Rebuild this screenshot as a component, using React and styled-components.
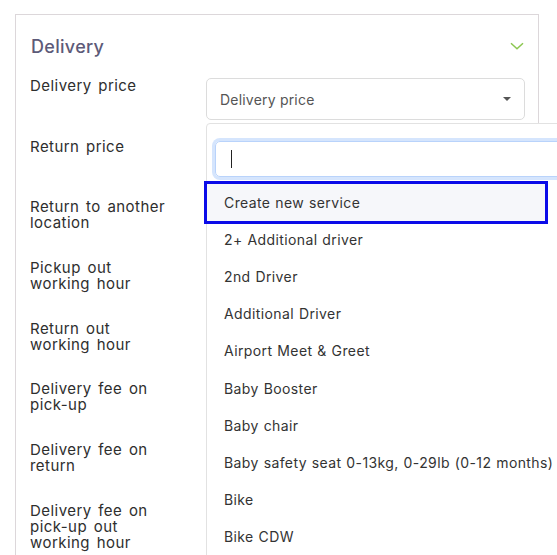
import React from "react";
import styled, { createGlobalStyle } from "styled-components";

const GlobalStyle = createGlobalStyle`
  html, body {
    margin: 0;
    padding: 0;
    overflow: hidden;
    background: #ffffff;
    font-family: "Inter", "Noto Sans", sans-serif;
  }
`;

const rows = [
  ["Delivery price"],
  ["Return price"],
  ["Return to another", "location"],
  ["Pickup out", "working hour"],
  ["Return out", "working hour"],
  ["Delivery fee on", "pick-up"],
  ["Delivery fee on", "return"],
  ["Delivery fee on", "pick-up out", "working hour"],
];

const services = [
  "2+ Additional driver",
  "2nd Driver",
  "Additional Driver",
  "Airport Meet & Greet",
  "Baby Booster",
  "Baby chair",
  "Baby safety seat 0-13kg, 0-29lb (0-12 months)",
  "Bike",
  "Bike CDW",
];

function App() {
  return (
    <Page>
      <GlobalStyle />
      <Card>
        <Header>
          <Title>Delivery</Title>
          <Chevron viewBox="0 0 14 8" fill="none">
            <path d="M1 1.2l6 5.6 6-5.6" stroke="#8cc751" strokeWidth="1.5" />
          </Chevron>
        </Header>
        <Form>
          {rows.map((lines, i) => (
            <Row key={i}>
              <Label>
                {lines.map((l) => (
                  <span key={l}>{l}</span>
                ))}
              </Label>
              {i === 0 ? (
                <SelectBox>
                  <span>Delivery price</span>
                  <Caret />
                </SelectBox>
              ) : (
                <FieldBox />
              )}
            </Row>
          ))}
          <Menu>
            <Search>
              <TextCursor />
            </Search>
            <Options>
              <Option active>Create new service</Option>
              {services.map((s) => (
                <Option key={s}>{s}</Option>
              ))}
            </Options>
          </Menu>
        </Form>
      </Card>
    </Page>
  );
}

export default App;

const Page = styled.div`
  padding: 14px 0 0 15px;
  height: 555px;
  box-sizing: border-box;
`;

const Card = styled.div`
  width: 524px;
  box-sizing: border-box;
  border: 1px solid #dcd7da;
  border-bottom: none;
  padding: 18px 13px 40px 15px;
`;

const Header = styled.div`
  display: flex;
  align-items: center;
  justify-content: space-between;
  height: 26px;
`;

const Title = styled.h3`
  margin: 0;
  font-size: 18px;
  font-weight: 500;
  letter-spacing: 0.3px;
  color: #5d5a78;
`;

const Chevron = styled.svg`
  width: 14px;
  height: 8px;
  margin-right: 1px;
`;

const Form = styled.div`
  position: relative;
  display: flex;
  flex-direction: column;
  gap: 18.7px;
  margin-top: 19px;
`;

const Row = styled.div`
  display: grid;
  grid-template-columns: 175px 1fr;
  min-height: 42px;
`;

const Label = styled.div`
  display: flex;
  flex-direction: column;
  font-size: 15px;
  line-height: 16px;
  letter-spacing: 0.45px;
  word-spacing: 2px;
  color: #2e2e2e;
  margin-left: -1px;
`;

const SelectBox = styled.div`
  height: 42px;
  box-sizing: border-box;
  border: 1px solid #dcdcdc;
  border-radius: 5px;
  display: flex;
  align-items: center;
  justify-content: space-between;
  padding: 0 13px 0 13px;
  font-size: 14px;
  letter-spacing: 0.2px;
  color: #555555;
`;

const FieldBox = styled.div`
  height: 42px;
  box-sizing: border-box;
  border: 1px solid #dcdcdc;
  border-radius: 5px;
`;

const Caret = styled.span`
  width: 0;
  height: 0;
  border-left: 4px solid transparent;
  border-right: 4px solid transparent;
  border-top: 4px solid #555555;
`;

const Menu = styled.div`
  position: absolute;
  left: 175px;
  top: 45px;
  width: 400px;
  height: 460px;
  background: #ffffff;
  border: 1px solid #e2e2e2;
  border-radius: 4px 0 0 0;
  padding-top: 17px;
`;

const Search = styled.div`
  margin-left: 8px;
  height: 34px;
  border: 1px solid #b9d3fb;
  border-radius: 5px;
  box-shadow: 0 0 0 3px #d5e5fd;
  display: flex;
  align-items: center;
  padding-left: 15px;
`;

const TextCursor = styled.span`
  width: 1px;
  height: 18px;
  background: #222222;
`;

const Options = styled.div`
  width: 338px;
  margin-top: 7px;
  display: flex;
  flex-direction: column;
`;

const Option = styled.div`
  height: 37.1px;
  display: flex;
  align-items: center;
  padding-left: 17px;
  font-size: 14px;
  letter-spacing: 0.4px;
  word-spacing: 0.5px;
  color: #333333;
  white-space: nowrap;
  background: ${(p) => (p.active ? "#f6f7fa" : "transparent")};
  outline: ${(p) => (p.active ? "3px solid #0b0be8" : "none")};
  outline-offset: 0;
`;
